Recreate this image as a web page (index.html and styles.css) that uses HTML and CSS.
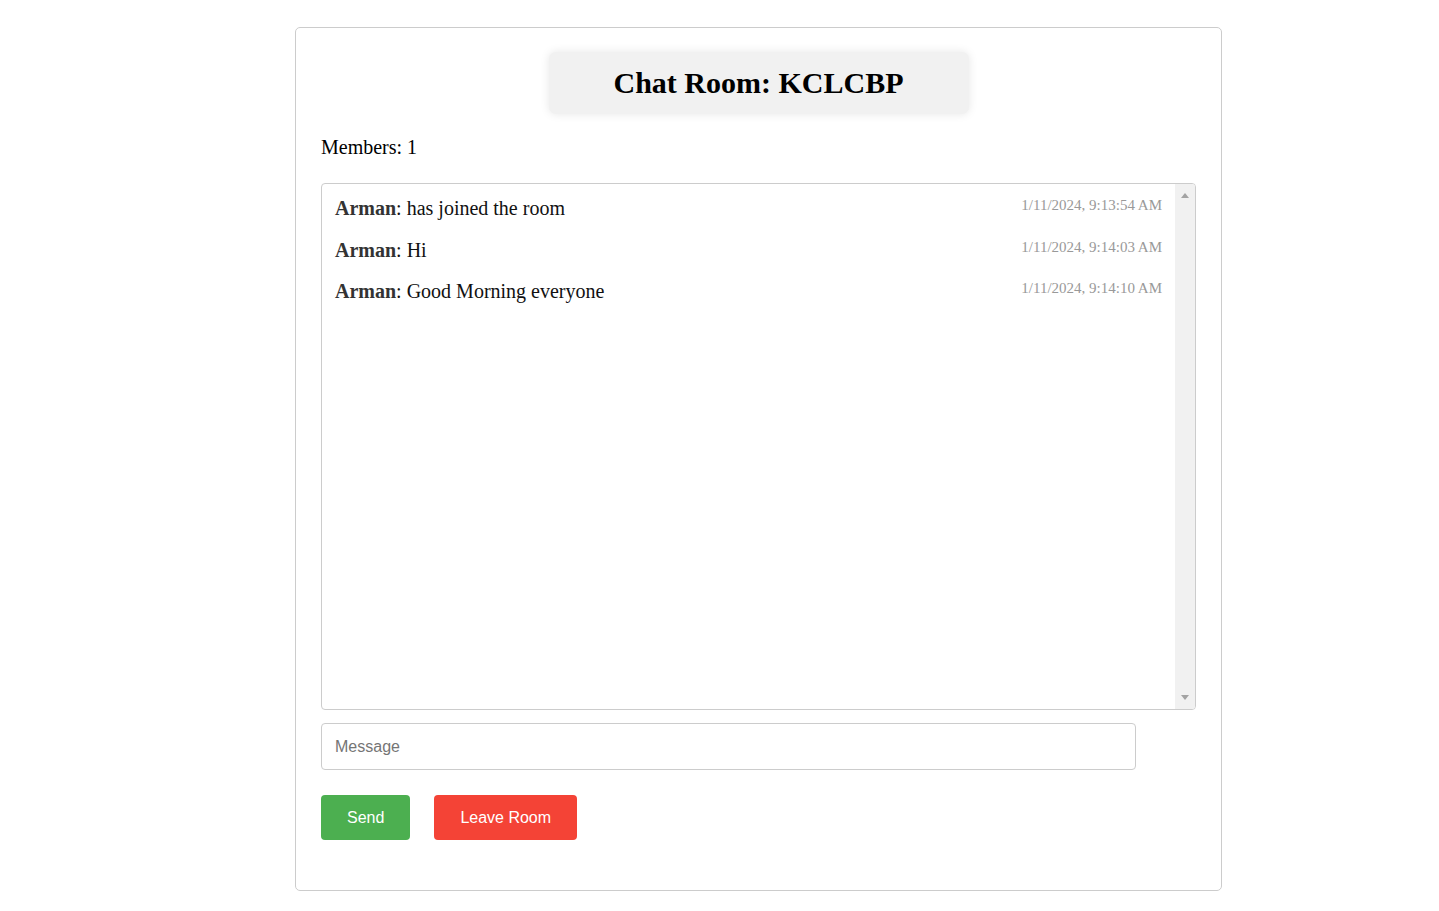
FILE: index.html
```html
<!DOCTYPE html>
<html>
<head>
<meta charset="utf-8">
<title>Chat Room</title>
<link rel="stylesheet" href="styles.css">
</head>
<body>
<div class="container">
  <div class="title-wrap">
    <h1 class="title">Chat Room: KCLCBP</h1>
  </div>
  <p class="members">Members: 1</p>
  <div class="chat-box">
    <div class="messages">
      <div class="message">
        <span class="msg-text"><strong>Arman</strong>: has joined the room</span>
        <span class="msg-time">1/11/2024, 9:13:54 AM</span>
      </div>
      <div class="message">
        <span class="msg-text"><strong>Arman</strong>: Hi</span>
        <span class="msg-time">1/11/2024, 9:14:03 AM</span>
      </div>
      <div class="message">
        <span class="msg-text"><strong>Arman</strong>: Good Morning everyone</span>
        <span class="msg-time">1/11/2024, 9:14:10 AM</span>
      </div>
    </div>
    <div class="scrollbar">
      <span class="arrow-up"></span>
      <span class="arrow-down"></span>
    </div>
  </div>
  <input class="msg-input" type="text" placeholder="Message">
  <div class="actions">
    <button class="btn btn-send">Send</button>
    <button class="btn btn-leave">Leave Room</button>
  </div>
</div>
</body>
</html>
```

FILE: styles.css
```css
html, body {
  margin: 0;
  padding: 0;
  background: #fff;
}

body {
  font-family: "Liberation Serif", "Times New Roman", serif;
  color: #000;
  padding-top: 27px;
}

.container {
  width: 927px;
  box-sizing: border-box;
  margin-left: 295px;
  border: 1px solid #ccc;
  border-radius: 5px;
  padding: 24px 25px 50px;
}

.title-wrap {
  text-align: center;
  margin-bottom: 22px;
}

.title {
  display: inline-block;
  margin: 0;
  font-size: 30px;
  font-weight: bold;
  line-height: 34px;
  padding: 14px 65px;
  background: #f1f1f1;
  border-radius: 7px;
  box-shadow: 0 0 10px rgba(0, 0, 0, 0.1);
}

.members {
  margin: 0 0 24px;
  font-size: 20px;
  line-height: 23px;
}

.chat-box {
  display: flex;
  height: 527px;
  box-sizing: border-box;
  border: 1px solid #ccc;
  border-radius: 4px;
  overflow: hidden;
}

.messages {
  flex: 1;
  padding: 4px 13px 12px 13px;
}

.message {
  display: flex;
  justify-content: space-between;
  align-items: flex-start;
  padding: 9.25px 0;
}

.msg-text {
  font-size: 20px;
  line-height: 23px;
  color: #111;
}

.msg-text strong {
  color: #333;
}

.msg-time {
  font-size: 15px;
  line-height: 17px;
  color: #999;
}

.scrollbar {
  width: 20px;
  background: #f1f1f1;
  display: flex;
  flex-direction: column;
  justify-content: space-between;
  align-items: center;
  padding: 9px 0 9px;
  box-sizing: border-box;
}

.arrow-up {
  width: 0;
  height: 0;
  border-left: 4.5px solid transparent;
  border-right: 4.5px solid transparent;
  border-bottom: 5px solid #a3a3a3;
}

.arrow-down {
  width: 0;
  height: 0;
  border-left: 4.5px solid transparent;
  border-right: 4.5px solid transparent;
  border-top: 5px solid #a3a3a3;
}

.msg-input {
  display: block;
  box-sizing: border-box;
  width: 815px;
  height: 47px;
  margin: 13px 0 25px;
  padding: 0 13px;
  border: 1px solid #ccc;
  border-radius: 4px;
  font-family: "Liberation Sans", Arial, sans-serif;
  font-size: 16px;
  color: #333;
  outline: none;
}

.msg-input::placeholder {
  color: #757575;
}

.actions {
  display: flex;
  gap: 24px;
}

.btn {
  height: 45px;
  padding: 0 26px;
  border: none;
  border-radius: 4px;
  color: #fff;
  font-family: "Liberation Sans", Arial, sans-serif;
  font-size: 16px;
  cursor: pointer;
}

.btn-send {
  background: #4caf50;
}

.btn-leave {
  background: #f44336;
}
```
